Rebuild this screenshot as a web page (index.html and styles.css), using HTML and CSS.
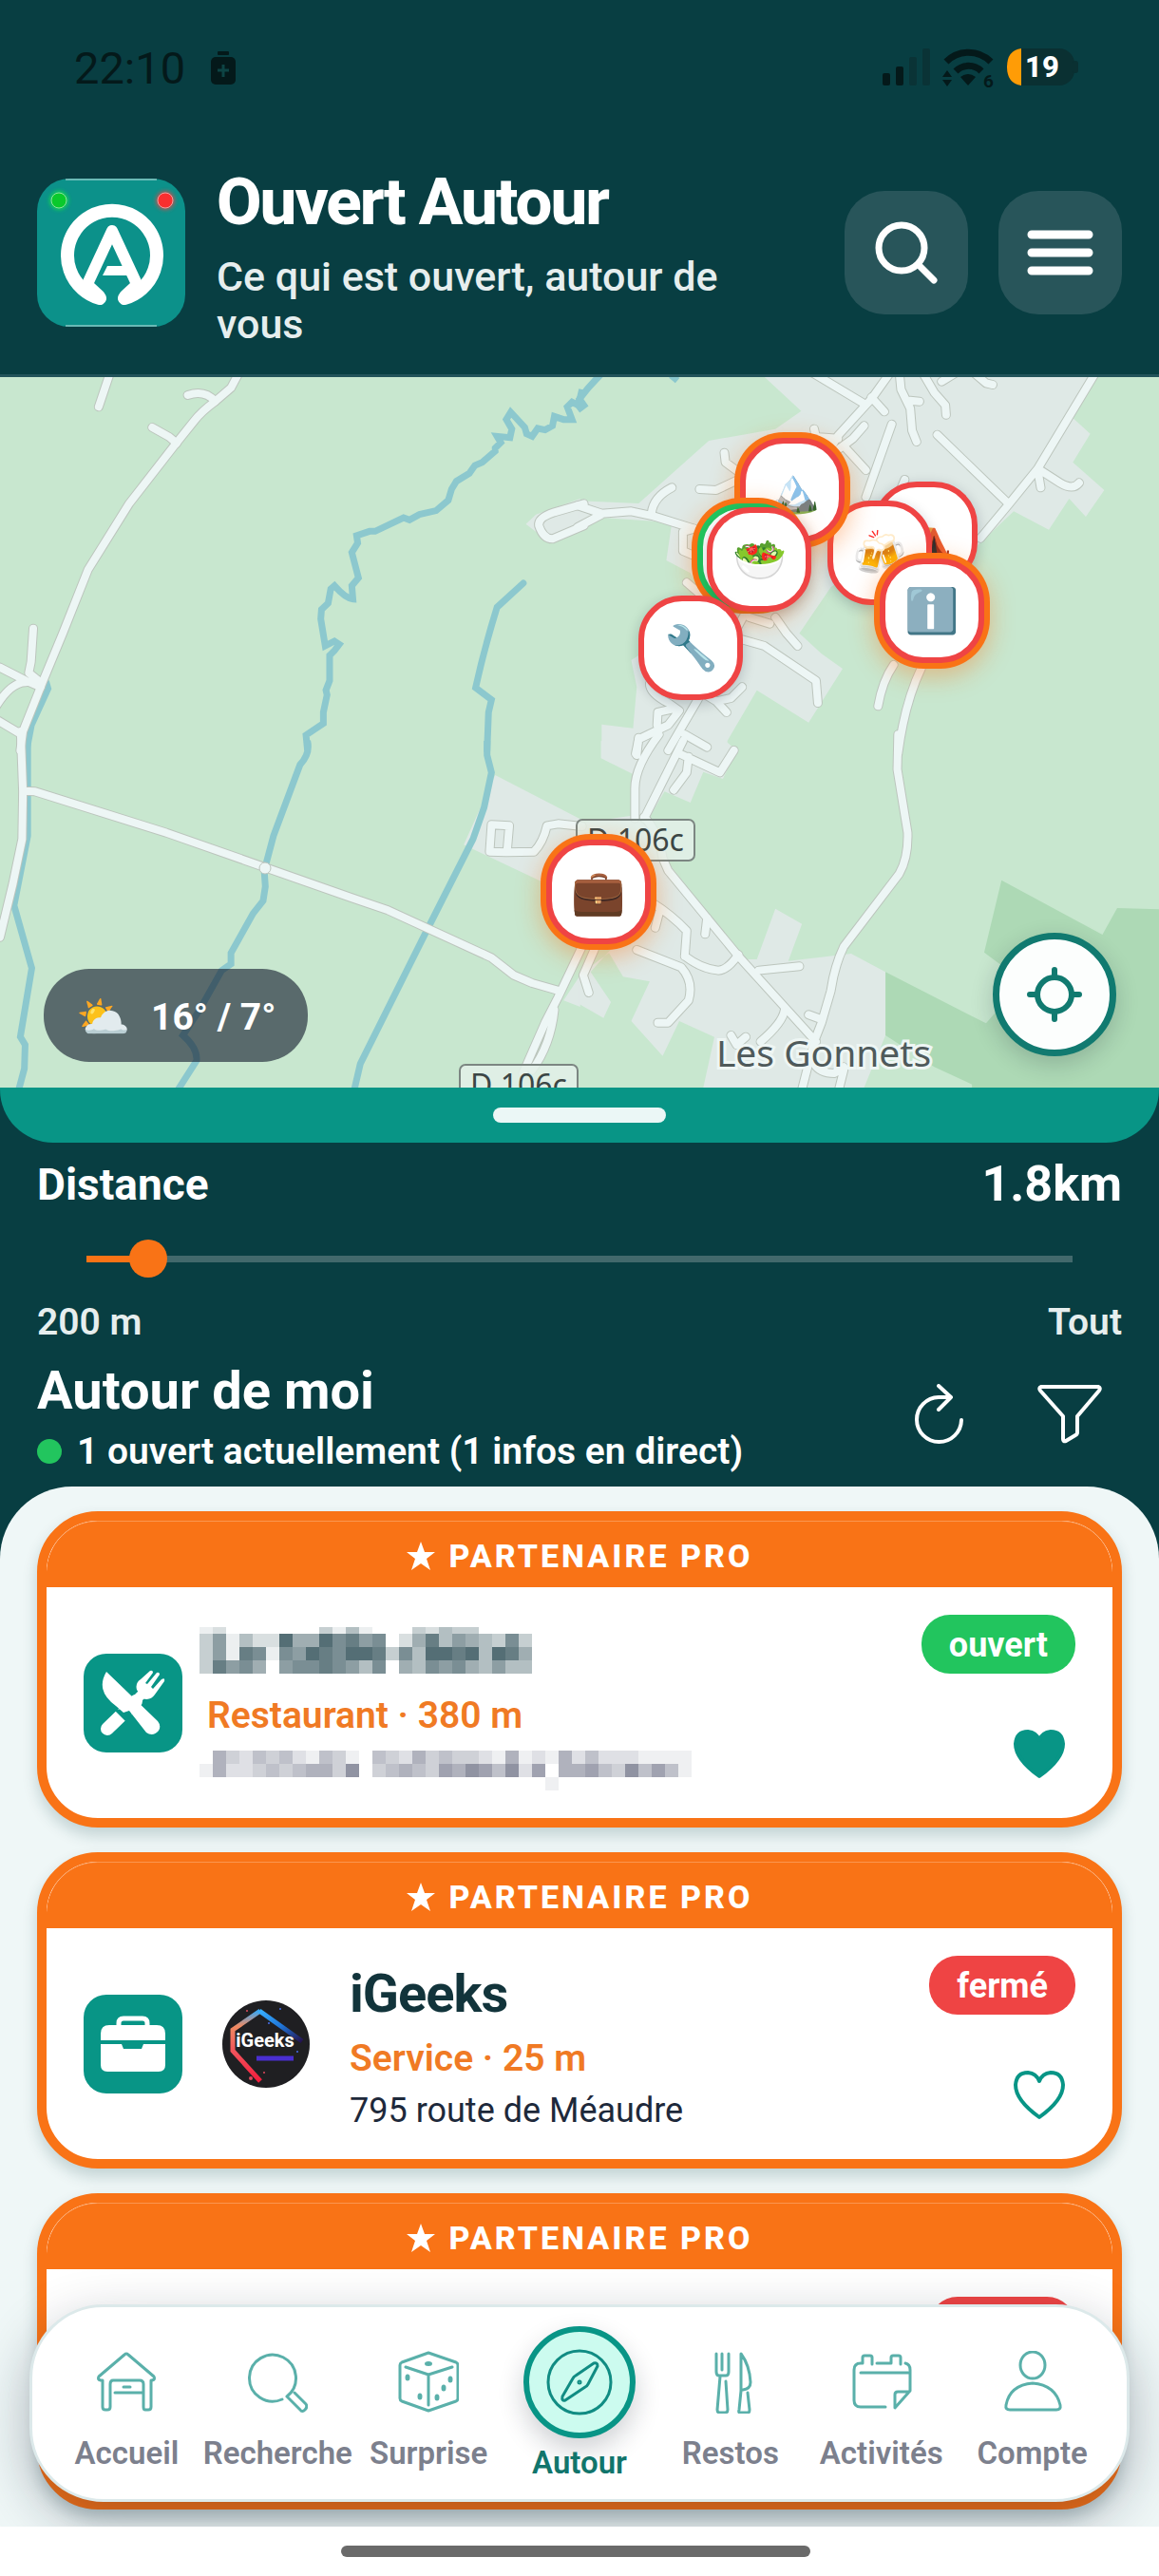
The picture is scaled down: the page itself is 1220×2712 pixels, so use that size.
FILE: index.html
```html
<!DOCTYPE html>
<html lang="fr">
<head>
<meta charset="utf-8">
<meta name="viewport" content="width=device-width, initial-scale=1">
<title>Ouvert Autour</title>
<link rel="stylesheet" href="styles.css">
</head>
<body>
<div class="app">
  <div class="statusbar">
    <div class="clock">
      <span>22:10</span>
      <svg class="saver" viewBox="0 0 28 36" aria-hidden="true"><rect x="8" y="0" width="12" height="4" rx="1"/><rect x="1" y="6" width="26" height="29" rx="5"/><path d="M14 14v13M8 20h12" stroke="#0d4444" stroke-width="3"/></svg>
    </div>
    <svg class="signals" viewBox="0 -4 206 52" role="img" aria-label="Réseau et batterie 19 %">
      <g fill="#04191a"><rect x="0" y="27" width="8" height="13" rx="2"/><rect x="14" y="20" width="8" height="20" rx="2"/></g>
      <g fill="#0a3336"><rect x="28" y="10" width="8" height="30" rx="2"/><rect x="42" y="1" width="8" height="39" rx="2"/></g>
      <g fill="none" stroke="#04191a" stroke-width="7"><path d="M67 15A33 33 0 0 1 114 15"/><path d="M77 25A19 19 0 0 1 104 25"/></g>
      <path fill="#04191a" d="M82 31Q90 25 98 31L90 40zM68 24l5 7h-10zM68 41l-5-7h10z"/>
      <text class="wifi-gen" x="106" y="42">6</text>
      <rect x="131" y="1" width="71" height="39" rx="16" fill="#0a3032"/><rect x="200" y="14" width="6" height="13" rx="3" fill="#0a3032"/>
      <path d="M146 1v39Q131 38 131 20.500T146 1z" fill="#ff9c06"/>
      <text class="battery" x="150" y="31">19</text>
    </svg>
  </div>

  <header class="header">
    <svg class="logo" viewBox="0 0 156 156" role="img" aria-label="Logo Ouvert Autour">
      <defs><filter id="glow" x="-60%" y="-60%" width="220%" height="220%"><feGaussianBlur stdDeviation="2"/></filter></defs>
      <rect width="156" height="156" rx="34" fill="#0c918a"/>
      <path d="M30 1H126M30 155H126" stroke="#c4e4e2" stroke-width="1"/>
      <g fill="none" stroke="#fff" stroke-width="14" stroke-linecap="round"><path d="M66 126A47 47 0 1 1 92 126"/><path d="M53 111L66 123M105 111L92 123" stroke-width="11"/></g>
      <path d="M53 111L79 55L105 111" fill="none" stroke="#fff" stroke-width="12" stroke-linejoin="round"/>
      <path d="M74 92H98V102H69z" fill="#fff"/>
      <circle cx="23" cy="23" r="10" fill="#19f03c" opacity=".7" filter="url(#glow)"/><circle cx="23" cy="23" r="8" fill="#0ac92c" stroke="#8fe0a0"/>
      <circle cx="135" cy="23" r="10" fill="#ff3c3c" opacity=".7" filter="url(#glow)"/><circle cx="135" cy="23" r="8" fill="#f92f2f" stroke="#f0a0a0"/>
    </svg>
    <div class="brand">
      <h1>Ouvert Autour</h1>
      <p>Ce qui est ouvert, autour de vous</p>
    </div>
    <div class="header-actions">
      <button class="square-btn" type="button" aria-label="Rechercher"><svg viewBox="0 0 70 70"><circle cx="30" cy="30" r="24"/><path d="M48 48L64 64"/></svg></button>
      <button class="square-btn" type="button" aria-label="Menu"><svg viewBox="0 0 70 70"><path d="M5 16H65M5 35H65M5 54H65" class="bars"/></svg></button>
    </div>
  </header>

  <section class="map" aria-label="Carte">
    <svg class="map-canvas" viewBox="0 0 1220 748" aria-hidden="true">
      <defs>
        <g id="roads">
          <g transform="translate(0 -7) scale(.389 .3333)">
            <path d="M650 0L625 55L580 100Q545 130 525 160L470 240L350 420L238 630L170 830L115 985L62 1140L55 1200"/>
            <path d="M300 0L267 115M508 78Q555 60 582 98M412 180L458 210L478 230M90 815L84 920L78 955L110 985M0 938L70 980L110 1000M-10 1060Q30 985 70 985M-5 1106L58 1150"/>
            <path d="M1580 421L1500 448Q1455 465 1458 490Q1470 532 1495 532L1580 490"/>
          </g>
          <g transform="translate(610 -7) scale(.389 .3333)">
            <path d="M-5 427L60 452L140 445L200 460L310 500M-5 495L60 455"/>
            <path d="M845 0L790 90L700 205L600 400L480 700L320 1040L240 1200"/>
            <path d="M620 0L770 105M790 85L825 130M865 0L870 60L895 120L900 190L912 225M895 95L920 98M925 0L960 70L990 110L992 140M980 35L1015 10M1065 5L1100 40L1118 45M845 170L775 400M770 175L740 215L700 250M720 245L775 315M635 185L640 210L700 215"/>
            <path d="M968 203L1160 420M1400 0L1240 310L1160 425L1085 530M1240 310L1300 355Q1335 380 1352 355M1240 315L1248 370M880 345L850 430"/>
            <path d="M392 260L395 290L430 320M325 375L370 378L430 345M250 370Q200 400 195 450M310 500L280 510L280 570L320 590M290 670L330 710"/>
            <path d="M440 850L500 870L640 980L645 1050M460 780L515 800M530 780L560 830L590 870M440 1000L410 1035L370 1045L398 1080M370 1045L335 1020"/>
            <path d="M190 990Q190 1020 240 1050L270 1075L240 1120L160 1165L152 1210M210 1120L212 1080L250 1070M285 1150L345 1190M850 930Q820 980 808 1060M925 940Q880 1050 862 1210"/>
          </g>
          <g transform="translate(0 383) scale(.389 .3333)">
            <path d="M56 -30L62 160L60 310L35 450L0 620M65 158L95 160L450 290L950 495L1050 535L1330 685L1390 740L1440 765L1515 790"/>
            <path d="M1575 650L1510 810L1475 890L1415 1050M1500 850Q1490 960 1440 1040M1575 270L1510 262L1480 268Q1470 320 1445 350L1370 352L1325 350L1330 265L1378 268L1372 350"/>
          </g>
          <g transform="translate(610 383) scale(.389 .3333)">
            <path d="M862 -20L860 90L888 290Q890 370 865 420L715 650Q690 710 680 790L655 890L635 950L600 1110"/>
            <path d="M280 0L175 245M215 -20Q150 80 150 150L150 245M155 45L160 -10M270 40L380 100L418 30M295 50L290 100L255 155M175 240Q215 290 225 370L240 410L430 680L640 950"/>
            <path d="M340 610L345 560M215 545L205 590M195 510Q250 550 290 600L285 680M155 660L275 715Q310 760 295 820L240 890L212 890M285 680Q330 720 375 725Q400 725 430 675M485 725L595 712M555 850Q550 890 490 950M620 865L655 880M410 930L425 960L450 935M40 660L10 740L25 795M635 1020Q650 1050 690 1050L715 1030M715 1040L700 1110"/>
          </g>
        </g>
      </defs>
      <rect width="1220" height="748" fill="#c8e7cf"/>
      <g fill="#dfe9e6">
        <path transform="translate(0 -7) scale(.389 .3333)" d="M1423 485L1450 455L1570 405L1570 510L1490 545z"/>
        <path transform="translate(610 -7) scale(.389 .3333)" d="M500 20L600 128L530 185L350 222L160 420L-2 412V480L60 465L250 480L235 600L300 640L325 690L160 900L140 915L155 1000L145 1130L60 1118V1210H400V1170L480 1010L620 1112L712 942L655 895L595 830L680 685L720 650L1070 560L1175 445L1270 503L1325 405L1370 462L1420 378L1335 290L1382 200L1335 150L1395 20z"/>
        <path transform="translate(0 383) scale(.389 .3333)" d="M1340 108L1575 250V505L1255 328zM1525 820L1570 740V840z"/>
        <path transform="translate(610 383) scale(.389 .3333)" d="M58 0V55L150 108V235L-2 260V420L180 480L100 640L60 690L30 730L85 825L65 875L-2 830V740L80 670L118 745L190 760L140 885L225 995L270 885L365 935L335 1095H770L828 930V730L735 672L565 695L602 578L530 530L480 690L440 690L230 370L190 240L230 160L300 195L335 98L388 120L425 30L395 0z"/>
      </g>
      <path fill="#add9b5" transform="translate(610 383) scale(.389 .3333)" d="M828 730L1100 892L1200 760L1095 668L1142 440L1415 612L1455 528L1575 532V1100H1062V1085L960 1030L828 930z"/>
      <g class="rivers">
        <g transform="translate(0 -7) scale(.389 .3333)">
          <path d="M1575 60L1565 110L1548 100L1535 115L1548 155L1525 155L1500 145L1495 175L1475 188L1455 183L1440 208L1425 200L1420 180L1382 132L1370 155L1385 185L1380 212L1345 208L1355 228L1340 245V255L1305 290L1285 300L1270 325L1235 350L1222 375L1213 410L1180 443L1135 455L1108 472L1092 465L1015 508H1000L965 522L968 545L952 575L970 655L952 680L955 722Q935 720 905 680L895 690L888 735L870 755L868 785L880 870L905 855L918 865L905 885L892 900V980L882 1010L885 1025L875 1080V1115L828 1152L832 1200"/>
          <path d="M1416 672L1345 748Q1310 880 1287 1002L1330 1040L1322 1080L1318 1200M125 985L130 1005L85 1120L72 1200" stroke-linecap="round"/>
        </g>
        <path transform="translate(610 -7) scale(.389 .3333)" d="M60 10Q25 50 0 90L12 110L-5 125M248 15L265 32"/>
        <g transform="translate(0 383) scale(.389 .3333)">
          <path d="M832 0Q840 40 812 75L740 300L715 410L718 460L712 505L685 545L625 670V705L600 725L540 850L495 930Q535 970 532 1010L480 1105M1318 0V45L1330 100L1310 210L1280 310L1150 610L975 1020L958 1105M75 0V300L38 520L86 718L55 935L68 960L66 1035L50 1105"/>
        </g>
      </g>
      <use href="#roads" class="road-edge"/>
      <use href="#roads" class="road-fill"/>
      <circle cx="279" cy="517" r="6" fill="#edf6f5" stroke="#bcc5bd" stroke-width="1"/>
      <g class="shield"><rect x="607" y="466" width="124" height="43" rx="6"/><text x="669" y="499">D 106c</text><rect x="484" y="724" width="124" height="43" rx="6"/><text x="546" y="757">D 106c</text></g>
      <text class="place" x="867" y="726">Les Gonnets</text>
    </svg>
    <button class="pin" type="button" style="left:79.800%;top:22.100%" aria-label="Camping">⛺</button>
    <button class="pin" type="button" style="left:75.900%;top:24.700%" aria-label="Bar">🍻</button>
    <button class="pin pro" type="button" style="left:80.400%;top:32.900%" aria-label="Informations">ℹ️</button>
    <button class="pin pro" type="button" style="left:68.400%;top:15.900%" aria-label="Montagne">🏔️</button>
    <button class="pin pro open" type="button" style="left:64.700%;top:25.100%" aria-label="Restaurant ouvert"></button>
    <button class="pin" type="button" style="left:65.500%;top:25.700%" aria-label="Restaurant">🥗</button>
    <button class="pin" type="button" style="left:59.600%;top:38.100%" aria-label="Atelier">🔧</button>
    <button class="pin pro" type="button" style="left:51.600%;top:72.500%" aria-label="Service">💼</button>
    <div class="weather"><span class="weather-icon">⛅</span><span>16° / 7°</span></div>
    <button class="locate" type="button" aria-label="Me localiser"><svg viewBox="0 0 58 58"><circle cx="29" cy="29" r="18"/><path d="M29 3V11M29 47V55M3 29H11M47 29H55"/></svg></button>
  </section>
  <div class="grip"><span></span></div>

  <section class="controls">
    <div class="distance-row"><label for="distance">Distance</label><output for="distance">1.8km</output></div>
    <input class="slider" id="distance" type="range" min="200" max="36000" value="1800" style="--fill:6%">
    <div class="range-ends"><span>200 m</span><span>Tout</span></div>
    <div class="list-head">
      <div>
        <h2>Autour de moi</h2>
        <p class="live"><span class="dot"></span>1 ouvert actuellement (1 infos en direct)</p>
      </div>
      <div class="list-actions">
        <button class="icon-btn" type="button" aria-label="Actualiser"><svg viewBox="0 4 70 70"><path d="M58 42A23.500 23.500 0 1 1 34 18H47M34 6L47 18L34 31"/></svg></button>
        <button class="icon-btn" type="button" aria-label="Filtrer"><svg viewBox="0 4 70 70"><path d="M5 7H65Q68 8 66 11L43 38V55Q43 57 41 58L31 64Q28 65 28 62V38L4 11Q2 8 5 7z"/></svg></button>
      </div>
    </div>
  </section>

  <main class="sheet">
    <article class="card">
      <div class="ribbon"><svg viewBox="0 0 30 30" aria-hidden="true"><path d="M15 0L19 11H30L21 18L25 30L15 23L5 30L9 18L0 11H11z"/></svg>PARTENAIRE PRO</div>
      <div class="card-body">
        <svg class="category" viewBox="0 0 104 104" aria-hidden="true">
          <rect width="104" height="104" rx="24" fill="#089586"/>
          <path d="M22 79L52 50" stroke="#fff" stroke-width="14" stroke-linecap="round" transform="translate(3 0)"/>
          <path d="M52 52L64 40" stroke="#fff" stroke-width="10"/>
          <path d="M56 38Q54 31 60 27L70 18Q73 17 73 20L65 31L67 32L77 20Q80 19 80 22L71 35L73 37L82 27Q86 25 85 29L75 43Q70 50 62 47z" fill="#fff"/>
          <path d="M32 59L50 57L51 66L44 71z" fill="#089586"/>
          <path d="M24 19Q12 39 34 55L42 62L48 60L66 83Q73 88 79 81Q82 76 78 71z" fill="#fff"/>
        </svg>
        <div class="info">
          <svg class="mosaic mosaic-name" viewBox="0 0 350 49" role="img" aria-label="Nom masqué" data-tone="dark" data-rows="1200000003141000324330000/3614229559786702584654373/3618717698799837499894985/3867506778764705476754644"></svg>
          <p class="meta">Restaurant · 380 m</p>
          <svg class="mosaic mosaic-address" viewBox="0 0 518 42" role="img" aria-label="Adresse masquée" data-tone="cool" data-rows="0532434214310432534332151215242221111/1522343455370345436576472605564374641/0000000000000000000000000010000000000"></svg>
        </div>
        <div class="side"><span class="badge open">ouvert</span><button class="fav on" type="button" aria-label="Retirer des favoris"><svg viewBox="0 0 60 60"><path d="M30 53Q5 35 5 19Q6 6 18 6Q27 7 30 15Q33 7 42 6Q54 6 55 19Q55 35 30 53z"/></svg></button></div>
      </div>
    </article>

    <article class="card">
      <div class="ribbon"><svg viewBox="0 0 30 30" aria-hidden="true"><path d="M15 0L19 11H30L21 18L25 30L15 23L5 30L9 18L0 11H11z"/></svg>PARTENAIRE PRO</div>
      <div class="card-body">
        <svg class="category" viewBox="0 0 104 104" aria-hidden="true">
          <rect width="104" height="104" rx="24" fill="#089586"/>
          <path d="M37 34V30Q37 25 42 25H62Q67 25 67 30V34" fill="none" stroke="#fff" stroke-width="5"/>
          <path d="M27 32H77Q86 32 86 41V48H18V41Q18 32 27 32zM18 52H40L42 57H61L63 52H86V74Q86 81 79 81H25Q18 81 18 74z" fill="#fff"/>
        </svg>
        <svg class="avatar" viewBox="0 0 92 92" role="img" aria-label="iGeeks">
          <defs>
            <linearGradient id="ig-left" x1="0" y1="0" x2="0" y2="1"><stop offset="0" stop-color="#38a8f5"/><stop offset=".22" stop-color="#ef8a62"/><stop offset=".6" stop-color="#f0505a"/><stop offset="1" stop-color="#f51d3c"/></linearGradient>
            <linearGradient id="ig-right" x1="0" y1="0" x2="1" y2="1"><stop offset="0" stop-color="#38b0ff"/><stop offset=".5" stop-color="#1f76d8"/><stop offset="1" stop-color="#24124e"/></linearGradient>
          </defs>
          <circle cx="46" cy="46" r="46" fill="#1f1f22"/>
          <path d="M40 11L11 31V53L40 85" fill="none" stroke="url(#ig-left)" stroke-width="5"/>
          <path d="M39 11L84 43" fill="none" stroke="url(#ig-right)" stroke-width="5"/>
          <path d="M36 61H75" stroke="#4a2fd0" stroke-width="5"/>
          <g fill="#e14a5c"><circle cx="26" cy="11" r="1"/><circle cx="30" cy="82" r="2"/><circle cx="44" cy="76" r="1"/></g><g fill="#4a6ff0"><circle cx="61" cy="9" r="1"/><circle cx="49" cy="24" r="1"/><circle cx="79" cy="54" r="1"/></g>
          <text x="45" y="49">iGeeks</text>
        </svg>
        <div class="info">
          <h3>iGeeks</h3>
          <p class="meta">Service · 25 m</p>
          <p class="address">795 route de Méaudre</p>
        </div>
        <div class="side"><span class="badge closed">fermé</span><button class="fav" type="button" aria-label="Ajouter aux favoris"><svg viewBox="0 0 60 60"><path d="M30 53Q5 35 5 19Q6 6 18 6Q27 7 30 15Q33 7 42 6Q54 6 55 19Q55 35 30 53z"/></svg></button></div>
      </div>
    </article>

    <article class="card">
      <div class="ribbon"><svg viewBox="0 0 30 30" aria-hidden="true"><path d="M15 0L19 11H30L21 18L25 30L15 23L5 30L9 18L0 11H11z"/></svg>PARTENAIRE PRO</div>
      <div class="card-body"><div class="info"></div><div class="side"><span class="badge closed">fermé</span></div></div>
    </article>

    <nav class="tabs" aria-label="Navigation principale">
      <a href="#accueil"><svg viewBox="0 0 64 66"><path d="M7 31H5Q1 30 3 27L30 4Q32 2 34 4L61 27Q63 30 59 31H58V59Q58 62 55 62H52Q50 62 50 59V35Q50 31 46 31H18Q15 31 15 35V59Q15 62 12 62H10Q7 62 7 59zM20 44H49M29 38H36"/></svg>Accueil</a>
      <a href="#recherche"><svg viewBox="0 0 64 66"><path d="M37 51A24.500 24.500 0 1 1 42 48L56 62Q58 65 61 62Q64 59 62 56L50 44"/></svg>Recherche</a>
      <a href="#surprise"><svg viewBox="0 0 64 66"><path d="M32 2L61 12Q63 13 63 15V50Q63 52 61 53L32 63L4 53Q2 52 2 50V15Q2 13 4 12zM8 17L32 25L57 17M32 25V57"/><g class="pips"><ellipse cx="32" cy="13.500" rx="4" ry="2.500"/><ellipse cx="10" cy="28" rx="2.500" ry="3.500"/><ellipse cx="23" cy="48" rx="2.500" ry="3.500"/><ellipse cx="55" cy="30" rx="2.500" ry="3.500"/><ellipse cx="48" cy="39" rx="2.500" ry="3.500"/><ellipse cx="41" cy="49" rx="2.500" ry="3.500"/></g></svg>Surprise</a>
      <a href="#autour" class="active" aria-current="page"><span class="tab-ring"><svg viewBox="0 0 72 72"><circle cx="36" cy="36" r="33"/><path d="M18 51L29 32Q30 30 32 29L51 16Q55 15 55 19L45 38Q44 40 42 41L21 55Q17 56 18 51z"/><circle cx="36" cy="36" r="1"/></svg></span>Autour</a>
      <a href="#restos"><svg viewBox="0 0 64 66"><path d="M17 3V22Q17 26 20 26H27Q30 26 30 22V3M23 3V20M21 27L18 62Q18 65 21 65H26Q29 65 29 62L27 32M42 65Q40 65 41 62L43 42V3Q52 15 53 33Q53 40 45 41M42 65H50Q52 65 52 62L50 44"/></svg>Restos</a>
      <a href="#activites"><svg viewBox="0 0 64 66"><path d="M36 59H10Q3 59 3 52V20Q3 13 10 13H12V7Q12 5 14 5H20Q22 5 22 7V14M27 13H42V7Q42 5 44 5H50Q52 5 52 7V14M57 13Q62 14 62 20V42L46 60V46Q46 43 49 43H61M10 23H60"/></svg>Activités</a>
      <a href="#compte"><svg viewBox="0 0 64 66"><ellipse cx="32" cy="15" rx="13" ry="14"/><path d="M4 57Q8 36 32 34Q56 36 61 57Q62 62 57 62H8Q3 62 4 57z"/></svg>Compte</a>
    </nav>
  </main>

  <div class="home-bar"><span></span></div>
</div>
<script src="script.js"></script>
</body>
</html>
```
FILE: script.js
```js
// Draws the masked name and address as rows of 14px tiles; each digit is a shade.
document.querySelectorAll(".mosaic").forEach(function (svg) {
  var base = svg.dataset.tone === "dark" ? [84, 110, 117] : [112, 116, 136];
  var short = svg.dataset.tone === "dark";
  var y = 0;
  svg.dataset.rows.split("/").forEach(function (row, r) {
    var height = short && r === 0 ? 7 : 14;
    row.split("").forEach(function (digit, c) {
      if (digit === "0") return;
      var k = Number(digit) / 9;
      var rgb = base.map(function (v) { return Math.round(255 - (255 - v) * k); });
      var cell = document.createElementNS("http://www.w3.org/2000/svg", "rect");
      cell.setAttribute("x", c * 14);
      cell.setAttribute("y", y);
      cell.setAttribute("width", 14);
      cell.setAttribute("height", height);
      cell.setAttribute("fill", "rgb(" + rgb.join(",") + ")");
      svg.appendChild(cell);
    });
    y += height;
  });
});
```
FILE: styles.css
```css
* { box-sizing: border-box; }

body {
  margin: 0;
  background: #fff;
  color: #fff;
  font-family: Roboto, "Noto Sans", sans-serif;
}

h1, h2, h3, p { margin: 0; }

button {
  padding: 0;
  border: 0;
  background: none;
  color: inherit;
  font: inherit;
}

svg { display: block; }

.app {
  min-height: 100vh;
  background: #083e42;
}

/* Phone status bar */
.statusbar {
  display: flex;
  align-items: center;
  justify-content: space-between;
  height: 140px;
  padding: 4px 85px 0 78px;
}

.clock {
  display: flex;
  align-items: center;
  gap: 26px;
  color: #04191a;
  font-size: 47px;
  line-height: 54px;
}

.saver { width: 28px; height: 36px; fill: #04191a; }
.signals { width: 206px; height: 52px; }
.wifi-gen { font-size: 19px; font-weight: 700; fill: #04191a; }
.battery { font-size: 31px; font-weight: 800; fill: #fff; }

/* Header */
.header {
  display: flex;
  align-items: center;
  padding: 26px 39px 28px;
  border-bottom: 3px solid #22535a;
}

.logo { flex: none; width: 156px; height: 156px; }

.brand { flex: 1; padding: 0 48px 0 33px; }

.brand h1 {
  font-size: 69px;
  font-weight: 800;
  line-height: 94px;
  letter-spacing: -2px;
  white-space: nowrap;
}

.brand p {
  margin-top: 6px;
  color: #e6eeee;
  font-size: 43px;
  font-weight: 500;
  line-height: 50px;
}

.header-actions { display: flex; gap: 32px; }

.square-btn {
  display: grid;
  place-items: center;
  width: 130px;
  height: 130px;
  border-radius: 42px;
  background: #28555a;
}

.square-btn svg {
  width: 70px;
  height: 70px;
  fill: none;
  stroke: #fff;
  stroke-width: 7;
  stroke-linecap: round;
}

.square-btn .bars { stroke-width: 9; }

/* Map */
.map { position: relative; overflow: hidden; }

.map-canvas { width: 100%; height: auto; }
.map-canvas path { vector-effect: non-scaling-stroke; }
.rivers { fill: none; stroke: #8cc8ce; stroke-width: 7; }
.road-edge, .road-fill { fill: none; stroke-linecap: round; stroke-linejoin: round; }
.road-edge { stroke: #bcc5bd; stroke-width: 10; }
.road-fill { stroke: #edf6f5; stroke-width: 8; }
.shield rect { fill: #e3f0e9; fill-opacity: .85; stroke: #7c8682; stroke-width: 2; }
.shield text, .place { font-family: "Noto Sans", sans-serif; text-anchor: middle; }
.shield text { fill: #3b4645; font-size: 32px; }
.place {
  fill: #4f5a5b;
  stroke: #eef6f4;
  stroke-width: 6;
  paint-order: stroke;
  font-size: 39px;
}

.pin {
  position: absolute;
  display: grid;
  place-items: center;
  width: 110px;
  height: 110px;
  border: 6px solid #ef4444;
  border-radius: 46px;
  background: #fff;
  box-shadow: 0 4px 14px rgba(15, 23, 42, .22);
  color: #000;
  font-size: 46px;
  line-height: 52px;
  transform: translate(-50%, -50%);
}

.pin.pro { box-shadow: 0 0 0 6px #f97316, 0 8px 26px 6px rgba(249, 115, 22, .4); }
.pin.open { border-color: #22c55e; }

.weather {
  position: absolute;
  left: 46px;
  bottom: 27px;
  display: flex;
  align-items: center;
  gap: 22px;
  height: 98px;
  padding: 4px 34px 0;
  border-radius: 48px;
  background: rgba(15, 23, 42, .6);
  font-size: 39px;
  font-weight: 700;
}

.weather-icon { font-size: 46px; }

.locate {
  position: absolute;
  right: 45px;
  bottom: 33px;
  display: grid;
  place-items: center;
  width: 130px;
  height: 130px;
  border: 7px solid #117a70;
  border-radius: 50%;
  background: #fcfefd;
  box-shadow: 0 8px 24px rgba(15, 23, 42, .2);
}

.locate svg {
  width: 58px;
  height: 58px;
  fill: none;
  stroke: #117a70;
  stroke-width: 6;
  stroke-linecap: round;
}

.grip {
  display: flex;
  justify-content: center;
  height: 58px;
  padding-top: 21px;
  border-radius: 0 0 56px 56px;
  background: #089586;
}

.grip span { width: 182px; height: 16px; border-radius: 8px; background: #ebf7f6; }

/* Distance and list heading */
.controls { padding: 14px 39px 13px; }

.distance-row, .range-ends, .list-head {
  display: flex;
  align-items: center;
  justify-content: space-between;
}

.distance-row { font-size: 46px; font-weight: 700; line-height: 60px; }
.distance-row output { font-size: 52px; }

.slider {
  display: block;
  appearance: none;
  width: calc(100% - 104px);
  height: 40px;
  margin: 28px 52px 23px;
  background: linear-gradient(to right, #f97316 var(--fill), #42696c var(--fill)) center / 100% 7px no-repeat;
}

.slider::-webkit-slider-thumb {
  appearance: none;
  width: 40px;
  height: 40px;
  border-radius: 50%;
  background: #f97316;
}

.range-ends {
  color: #e6eeee;
  font-size: 39px;
  font-weight: 600;
  line-height: 48px;
}

.list-head { margin-top: 15px; }
.list-head h2 { font-size: 56px; font-weight: 700; line-height: 66px; }

.live {
  display: flex;
  align-items: center;
  gap: 16px;
  margin-top: 7px;
  font-size: 39px;
  font-weight: 600;
  line-height: 48px;
}

.dot { width: 26px; height: 26px; border-radius: 50%; background: #22c55e; }
.list-actions { display: flex; gap: 27px; }

.icon-btn { display: grid; place-items: center; width: 110px; height: 110px; }

.icon-btn svg {
  width: 70px;
  height: 70px;
  fill: none;
  stroke: #fff;
  stroke-width: 4;
  stroke-linecap: round;
  stroke-linejoin: round;
}

/* List of places */
.sheet {
  position: relative;
  display: flex;
  flex-direction: column;
  gap: 26px;
  padding: 26px 39px 18px;
  overflow: hidden;
  border-radius: 76px 76px 0 0;
  background: #eff7f7;
}

.card {
  overflow: hidden;
  border: 10px solid #f97316;
  border-radius: 64px;
  background: #fff;
  box-shadow: 0 8px 16px rgba(8, 62, 66, .2);
}

.ribbon {
  display: flex;
  align-items: center;
  justify-content: center;
  gap: 15px;
  height: 70px;
  padding-top: 4px;
  border-radius: 54px 54px 0 0;
  background: #f97316;
  box-shadow: inset 0 1px rgba(255, 255, 255, .25);
  font-size: 34px;
  font-weight: 800;
  letter-spacing: 3px;
}

.ribbon svg { width: 30px; height: 30px; fill: #fff; }

.card-body {
  display: flex;
  align-items: center;
  min-height: 243px;
  padding: 29px 39px;
}

.category { flex: none; width: 104px; height: 104px; }
.avatar { flex: none; width: 92px; height: 92px; margin: 0 16px 0 42px; }
.avatar text { fill: #fff; font-size: 20px; font-weight: 700; text-anchor: middle; }

.info { flex: 1; padding-left: 26px; }

.info h3 {
  color: #12343b;
  font-size: 56px;
  font-weight: 700;
  line-height: 78px;
  letter-spacing: -1px;
}

.meta {
  margin-top: 4px;
  color: #f07a24;
  font-size: 39px;
  font-weight: 600;
  line-height: 50px;
}

.address {
  margin-top: 8px;
  color: #1e293b;
  font-size: 36px;
  line-height: 44px;
}

.mosaic { margin-left: -8px; }
.mosaic-name { width: 350px; height: 49px; margin-top: 13px; margin-bottom: 19px; }
.mosaic-address { width: 518px; height: 42px; margin-top: 12px; }

.side {
  display: flex;
  flex-direction: column;
  align-items: flex-end;
  align-self: stretch;
  justify-content: space-between;
}

.badge {
  height: 62px;
  padding: 2px 29px 0;
  border-radius: 30px;
  font-size: 36px;
  font-weight: 700;
  line-height: 60px;
}

.badge.open { background: #22c55e; }
.badge.closed { background: #ef4444; }

.fav { display: grid; place-items: center; width: 76px; height: 76px; }

.fav svg {
  width: 60px;
  height: 60px;
  fill: none;
  stroke: #089586;
  stroke-width: 4;
  stroke-linejoin: round;
}

.fav.on svg { fill: #089586; }

/* Floating tab bar */
.tabs {
  position: absolute;
  right: 31px;
  bottom: 26px;
  left: 31px;
  display: flex;
  padding: 20px 20px 18px;
  border: 3px solid #dce9ea;
  border-radius: 78px;
  background: #fff;
  box-shadow: 0 20px 56px rgba(15, 23, 42, .3);
}

.tabs a {
  display: flex;
  flex: 1 1 0;
  flex-direction: column;
  align-items: center;
  gap: 22px;
  min-width: 0;
  padding-top: 26px;
  color: #7c808d;
  font-size: 33px;
  font-weight: 600;
  line-height: 40px;
  text-decoration: none;
}

.tabs svg {
  width: 64px;
  height: 66px;
  fill: none;
  stroke: #5ab0aa;
  stroke-width: 3;
  stroke-linecap: round;
  stroke-linejoin: round;
}

.tabs .pips { fill: #5ab0aa; stroke: none; }
.tabs .active { gap: 6px; padding-top: 0; color: #11756c; }

.tab-ring {
  display: grid;
  place-items: center;
  width: 118px;
  height: 118px;
  border: 6px solid #089586;
  border-radius: 50%;
  background: #ccfbef;
  box-shadow: 0 12px 28px rgba(15, 23, 42, .2);
}

.tabs .tab-ring svg { width: 72px; height: 72px; stroke: #118c83; }

/* System home indicator */
.home-bar {
  display: flex;
  justify-content: center;
  padding: 20px 8px 20px 0;
  background: #fff;
}

.home-bar span { width: 494px; height: 12px; border-radius: 6px; background: #6a6a6a; }
```
